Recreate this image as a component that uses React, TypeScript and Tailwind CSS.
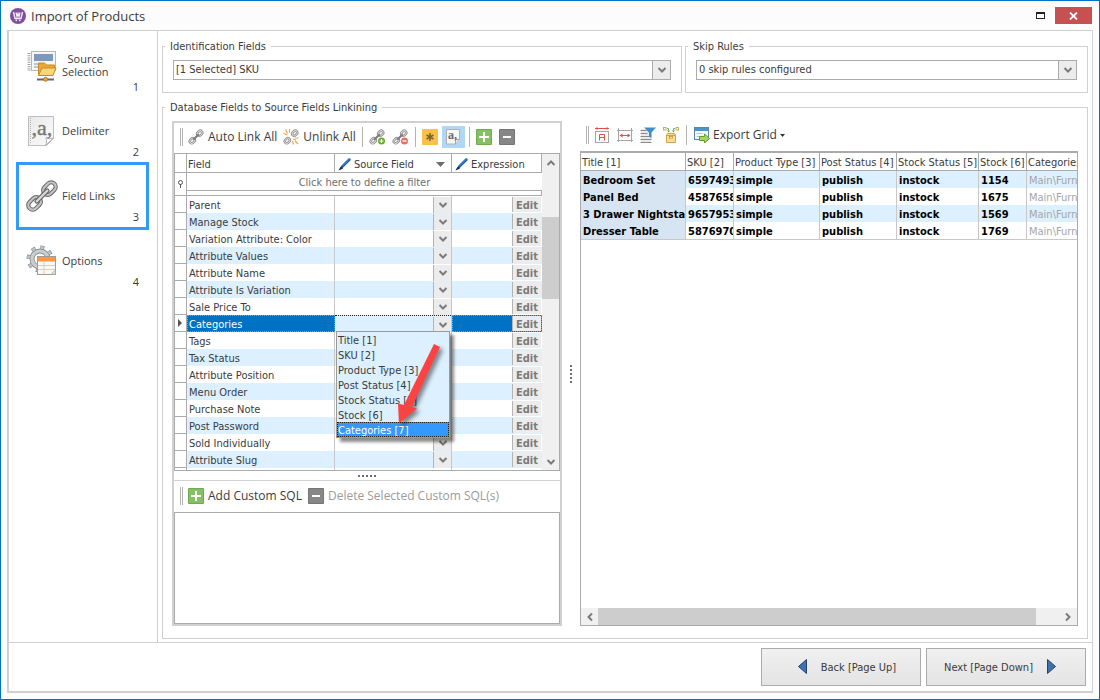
import type { ReactNode } from 'react';

const SOURCE_FIELDS = [
  'Title [1]',
  'SKU [2]',
  'Product Type [3]',
  'Post Status [4]',
  'Stock Status [5]',
  'Stock [6]',
  'Categories [7]',
];

const DB_FIELDS = [
  'Parent',
  'Manage Stock',
  'Variation Attribute: Color',
  'Attribute Values',
  'Attribute Name',
  'Attribute Is Variation',
  'Sale Price To',
  'Categories',
  'Tags',
  'Tax Status',
  'Attribute Position',
  'Menu Order',
  'Purchase Note',
  'Post Password',
  'Sold Individually',
  'Attribute Slug',
];

const PRODUCTS = [
  ['Bedroom Set', '6597493', 'simple', 'publish', 'instock', '1154', 'Main\\Furniture'],
  ['Panel Bed', '4587658', 'simple', 'publish', 'instock', '1675', 'Main\\Furniture'],
  ['3 Drawer Nightstand', '9657953', 'simple', 'publish', 'instock', '1569', 'Main\\Furniture'],
  ['Dresser Table', '5876970', 'simple', 'publish', 'instock', '1769', 'Main\\Furniture'],
];

/* ---------- icons ---------- */

function AppIcon() {
  return (
    <svg width="16" height="16" viewBox="0 0 16 16">
      <circle cx="8" cy="8" r="8" fill="#7f4fa0" />
      <path d="M3.5 4 L5 10.5 H11 L12.5 4" fill="none" stroke="#f3ecf7" strokeWidth="1.4" />
      <path d="M6 4.5 L7 8.5 L8 5.5 L9 8.5 L10 4.5" fill="none" stroke="#f3ecf7" strokeWidth="1.3" />
      <circle cx="6.3" cy="12.3" r="0.9" fill="#f3ecf7" />
      <circle cx="9.8" cy="12.3" r="0.9" fill="#f3ecf7" />
    </svg>
  );
}

function SourceIcon() {
  return (
    <svg width="32" height="32" viewBox="0 0 32 32">
      <path d="M3 3v18" stroke="#a0a0a0" strokeWidth="3" strokeDasharray="1 1.2" />
      <rect x="5.5" y="1.5" width="24" height="19" fill="#f4f5f6" stroke="#b5b5b5" />
      <rect x="8" y="4" width="19" height="7" fill="#7d97bd" />
      <path d="M8 14h8M8 17h5" stroke="#7d97bd" />
      <path d="M12.5 25v-12h6l2 2h8v3.500l-2.500 7z" fill="#e9a93a" stroke="#c98a22" />
      <path d="M12.500 25.500l3.500-7.500h14l-3 7.500z" fill="#fbd678" stroke="#c98a22" />
      <path d="M11 29.500h17" stroke="#666" strokeWidth="2" />
      <circle cx="19.500" cy="29.300" r="2" fill="#f5a623" stroke="#9c6510" strokeWidth="0.7" />
    </svg>
  );
}

function DelimiterIcon() {
  return (
    <svg width="32" height="32" viewBox="0 0 32 32">
      <defs>
        <linearGradient id="sheet" x1="0" y1="0" x2="1" y2="1">
          <stop offset="0" stopColor="#e9e9e9" />
          <stop offset="1" stopColor="#fbfbfb" />
        </linearGradient>
      </defs>
      <path d="M2.500 1.500h25v22l-7 7h-18z" fill="url(#sheet)" stroke="#bdbdbd" />
      <path d="M19.500 30.500c1.500-3 1-5 .5-8c2.500 1.500 5 1.500 7.500.500z" fill="#fff" stroke="#b0b0b0" />
      <path d="M4.500 3v26" stroke="#b5b5b5" strokeDasharray="1 1" />
      <text x="16" y="20" textAnchor="middle" fontFamily="Liberation Serif, serif" fontSize="22" fill="#777" stroke="#777" strokeWidth="0.400">
        ,a,
      </text>
    </svg>
  );
}

function ChainIcon() {
  return (
    <svg width="32" height="32" viewBox="0 0 32 32">
      <g fill="none" transform="rotate(-45 16 16)">
        <rect x="-1.500" y="11.500" width="14" height="9" rx="4.500" stroke="#666" strokeWidth="4.200" />
        <rect x="19.500" y="11.500" width="14" height="9" rx="4.500" stroke="#666" strokeWidth="4.200" />
        <rect x="-1.500" y="11.500" width="14" height="9" rx="4.500" stroke="#c4c4c4" strokeWidth="2.200" />
        <rect x="19.500" y="11.500" width="14" height="9" rx="4.500" stroke="#c4c4c4" strokeWidth="2.200" />
        <path d="M8.500 16h15" stroke="#606060" strokeWidth="4.600" strokeLinecap="round" />
        <path d="M8.500 16h15" stroke="#d6d6d6" strokeWidth="2.400" strokeLinecap="round" />
      </g>
    </svg>
  );
}

function OptionsIcon() {
  return (
    <svg width="32" height="32" viewBox="0 0 32 32">
      <circle cx="14" cy="14" r="11.500" fill="none" stroke="#8b9196" strokeWidth="4" strokeDasharray="4 5.030" />
      <circle cx="14" cy="14" r="8" fill="none" stroke="#8b9196" strokeWidth="5" />
      <circle cx="14" cy="14" r="8" fill="none" stroke="#c9ced1" strokeWidth="3.200" />
      <circle cx="14" cy="14" r="11.500" fill="none" stroke="#c2c7ca" strokeWidth="2.600" strokeDasharray="2.600 6.430" strokeDashoffset="-0.700" />
      <rect x="11.500" y="11.500" width="18" height="18" fill="#fbf7f2" stroke="#a49c94" />
      <rect x="12" y="12" width="17" height="4.500" fill="#f59a4a" />
      <path d="M12 20.500h17M12 24.500h17M18 17v12" stroke="#d5cfc8" />
      <path d="M29.500 24.500l-4.500 5h4.500z" fill="#ddd" stroke="#999" strokeWidth="0.600" />
    </svg>
  );
}

function SmallChain({ mark }: { mark?: 'spark' | 'add' | 'remove' }) {
  return (
    <svg width="16" height="16" viewBox="0 0 16 16">
      <g fill="none" transform="rotate(-45 8 8)">
        <rect x="0" y="6" width="5.500" height="4" rx="2" stroke="#858585" strokeWidth="2.400" />
        <rect x="10.500" y="6" width="5.500" height="4" rx="2" stroke="#858585" strokeWidth="2.400" />
        <rect x="0" y="6" width="5.500" height="4" rx="2" stroke="#dcdcdc" strokeWidth="1" />
        <rect x="10.500" y="6" width="5.500" height="4" rx="2" stroke="#dcdcdc" strokeWidth="1" />
        {mark !== 'spark' && <path d="M4 8h8" stroke="#7d7d7d" strokeWidth="2" />}
      </g>
      {mark === 'spark' && (
        <path d="M2.500 0.500l2 4M0.500 4.500l4 1.500M6.500 0v3.500M10 10l3 1M9.500 12l1 3.500M12 9h3.500M12 12l3 3" stroke="#f2a24a" strokeWidth="1.200" fill="none" />
      )}
      {mark === 'add' && (
        <>
          <circle cx="12.500" cy="12" r="3.500" fill="#6aab2e" />
          <path d="M10.500 12h4M12.500 10v4" stroke="#fff" strokeWidth="1.200" />
        </>
      )}
      {mark === 'remove' && (
        <>
          <circle cx="12.500" cy="12" r="3.500" fill="#e8705c" />
          <path d="M10.500 12h4" stroke="#fff" strokeWidth="1.400" />
        </>
      )}
    </svg>
  );
}

function StarIcon() {
  return (
    <svg width="16" height="16" viewBox="0 0 16 16">
      <rect width="16" height="16" rx="1" fill="#fbc04a" />
      <path d="M8 4v8M4.500 6l7 4M11.500 6l-7 4" stroke="#7a6238" strokeWidth="1.600" />
    </svg>
  );
}

function PageIcon() {
  return (
    <svg width="14" height="16" viewBox="0 0 14 16">
      <path d="M0.500 0.500h13v10l-4 4.500h-9z" fill="#f7f7f7" stroke="#b0b0b0" />
      <path d="M9.500 15v-4.500h4" fill="#e4e4e4" stroke="#a5a5a5" />
      <text x="2" y="10" fontFamily="Liberation Serif, serif" fontWeight="bold" fontSize="12" fill="#666">
        a,
      </text>
    </svg>
  );
}

function PlusIcon() {
  return (
    <svg width="16" height="16" viewBox="0 0 16 16">
      <rect width="16" height="16" rx="1" fill="#6faa50" />
      <rect x="1" y="1" width="14" height="14" fill="#86c065" />
      <path d="M3 8h10M8 3v10" stroke="#fff" strokeWidth="2" />
    </svg>
  );
}

function MinusIcon() {
  return (
    <svg width="16" height="16" viewBox="0 0 16 16">
      <rect width="16" height="16" rx="1" fill="#757575" />
      <rect x="1" y="1" width="14" height="14" fill="#878787" />
      <path d="M4 8h8" stroke="#fff" strokeWidth="2" />
    </svg>
  );
}

function PenIcon() {
  return (
    <svg width="14" height="14" viewBox="0 0 14 14">
      <path d="M0.500 13.500l3-5l7-7c1.200-1 3 .8 1.800 2l-7.300 7.200z" fill="#1657a8" />
      <path d="M4 9.500l7.500-7.500" stroke="#4d94e0" />
      <path d="M0.500 13.500l2.500-4l2 2z" fill="#0d2b57" />
    </svg>
  );
}

function FitTextIcon() {
  return (
    <svg width="16" height="16" viewBox="0 0 16 16" fill="none">
      <path d="M1 1.500h14" stroke="#d9534f" />
      <path d="M3.500 0v3l-2.500-1.500zM12.500 0v3l2.500-1.500z" fill="#d9534f" />
      <rect x="1.500" y="4.500" width="13" height="11" stroke="#a5a5a5" />
      <path d="M5.500 13.500v-6h5v6M5.500 10.500h5" stroke="#d9534f" />
    </svg>
  );
}

function FitWidthIcon() {
  return (
    <svg width="16" height="16" viewBox="0 0 16 16" fill="none">
      <path d="M1.500 1v14M14.500 1v14M0 3.500h16M0 13.500h16" stroke="#a5a5a5" />
      <path d="M3 8.500h10" stroke="#d9534f" />
      <path d="M5.500 6.500v4l-3-2zM10.500 6.500v4l3-2z" fill="#d9534f" />
    </svg>
  );
}

function FilterIcon() {
  return (
    <svg width="16" height="16" viewBox="0 0 16 16" fill="none">
      <rect x="1" y="2" width="10" height="13" fill="#e9e9e9" />
      <path d="M0.500 3.500h6M0.500 6.500h7M0.500 9.500h9M0.500 12.500h11M0.500 15.500h11" stroke="#8b8b8b" />
      <path d="M4 0.500h12l-4.500 5v6l-2.500-2v-4z" fill="#3c8fca" />
    </svg>
  );
}

function BoxIcon() {
  return (
    <svg width="16" height="16" viewBox="0 0 16 16" fill="none">
      <rect x="0.500" y="0.500" width="2.500" height="2.500" stroke="#d0a866" />
      <rect x="13" y="0.500" width="2.500" height="2.500" stroke="#d0a866" />
      <path d="M4 1.500h1.500v2M12 1.500h-1.500v2" stroke="#7cab64" />
      <path d="M4 3.500h3l-1.500 2zM9 3.500h3l-1.500 2z" fill="#5fa343" />
      <path d="M3.500 8l1-1.500h7l1 1.500v7.500h-9z" fill="#f9dc92" stroke="#cfa346" />
      <path d="M3.500 8.500h9" stroke="#cfa346" />
      <rect x="6.500" y="9.500" width="3" height="1.500" fill="#fff" stroke="#b08a3a" strokeWidth="0.700" />
    </svg>
  );
}

function ExportIcon() {
  return (
    <svg width="16" height="16" viewBox="0 0 16 16" fill="none">
      <rect x="0.500" y="0.500" width="14" height="12" fill="#f5f8fb" stroke="#5b86a8" />
      <rect x="1" y="1" width="13" height="3" fill="#4a94cc" />
      <path d="M2.500 6.500h6M2.500 9.500h4" stroke="#b9c9d6" />
      <path d="M5.500 9.500h5v-2.500l5 4.500l-5 4.500v-2.500h-5z" fill="#a4d65e" stroke="#5f9f2a" />
    </svg>
  );
}

function Chevron({ dir = 'down' }: { dir?: 'down' | 'up' | 'left' | 'right' }) {
  const paths = {
    down: 'M1.500 3l3.500 3.500l3.500-3.500',
    up: 'M1.500 7l3.500-3.500l3.500 3.500',
    left: 'M7 1.500l-3.500 3.500l3.500 3.500',
    right: 'M3 1.500l3.500 3.500l-3.500 3.500',
  };
  return (
    <svg width="10" height="10" viewBox="0 0 10 10" className="shrink-0">
      <path d={paths[dir]} fill="none" stroke="#7b7b7b" strokeWidth="2" />
    </svg>
  );
}

function PointerArrow() {
  return (
    <svg width="60" height="96" viewBox="0 0 60 96" className="pointer-events-none absolute left-[56px] top-[8px] drop-shadow-[3px_3px_2px_rgba(0,0,0,0.45)]">
      <path d="M42 5l6 3l-28 60l5 1.500l-18 15l-1-20l6 1.500z" fill="#fb4343" />
    </svg>
  );
}

/* ---------- small parts ---------- */

function Grip() {
  return <span className="h-[18px] w-[3px] shrink-0 border-x border-[#b4b4b4]" />;
}

function Separator() {
  return <span className="h-[20px] w-px shrink-0 bg-[#b4b4b4]" />;
}

function Dots({ vertical }: { vertical?: boolean }) {
  return (
    <span className={vertical ? 'flex flex-col gap-[2px]' : 'flex gap-[2px]'}>
      {[0, 1, 2, 3, 4].map((i) => (
        <i key={i} className="size-[2px] bg-[#6d6d6d]" />
      ))}
    </span>
  );
}

function ToolButton({ icon, label, disabled, title }: { icon: ReactNode; label?: string; disabled?: boolean; title?: string }) {
  return (
    <button
      type="button"
      aria-label={title}
      disabled={disabled}
      className="flex items-center gap-1 whitespace-nowrap font-['Open_Sans',sans-serif] text-[12px] leading-[16px] disabled:text-[#9b9b9b]"
    >
      {icon}
      {label}
    </button>
  );
}

function GroupBox({ title, className = '', children }: { title: string; className?: string; children: ReactNode }) {
  return (
    <fieldset className={`min-w-0 border border-[#d0d0d0] px-[9px] pt-[7px] ${className}`}>
      <legend className="-ml-[7px] h-[14px] px-[5px] leading-[16px]">{title}</legend>
      {children}
    </fieldset>
  );
}

function Combo({ label, value }: { label: string; value: string }) {
  return (
    <div className="mx-px grid h-[20px] grid-cols-[1fr_18px] border border-[#ababab]">
      <select aria-label={label} className="col-span-2 col-start-1 row-start-1 appearance-none bg-white pl-[2px] leading-[18px] outline-none">
        <option>{value}</option>
      </select>
      <span className="pointer-events-none col-start-2 row-start-1 flex items-center justify-center border-l border-[#ababab] bg-[#ececec]">
        <Chevron />
      </span>
    </div>
  );
}

function NavItem({ icon, label, num, active }: { icon: ReactNode; label: ReactNode; num: number; active?: boolean }) {
  return (
    <button
      type="button"
      className={`-mt-[3px] flex h-[68px] items-center gap-1 border-[3px] px-[7px] font-['Open_Sans',sans-serif] leading-[13px] first:mt-0 ${active ? 'border-[#3399ff]' : 'border-transparent'}`}
    >
      {icon}
      <span className="pb-[2px] text-center">{label}</span>
      <span className="ml-auto self-end pb-1">{num}</span>
    </button>
  );
}

/* ---------- field mapping grid ---------- */

function FieldRow({ name, odd, selected }: { name: string; odd: boolean; selected: boolean }) {
  const dotted = selected ? 'outline-1 -outline-offset-1 outline-dotted outline-[#e08a3c]' : '';
  return (
    <tr className={`h-[17px] ${odd ? 'bg-[#dcf0ff]' : 'bg-white'}`}>
      <td className="border-b border-r border-[#ababab] bg-white p-0">
        {selected && (
          <svg width="4" height="8" viewBox="0 0 4 8" className="ml-[3px]">
            <path d="M0 0l4 4l-4 4z" fill="#555" />
          </svg>
        )}
      </td>
      <td className={`truncate p-0 pl-[2px] pt-px ${selected ? 'bg-[#0072c6] text-white' : 'border-r border-[#c8c8c8]'} ${dotted}`}>{name}</td>
      <td className={`relative border-r border-[#c8c8c8] p-0 ${selected ? 'bg-[#dcf0ff]' : ''}`}>
        <div className={`grid h-[17px] grid-cols-[1fr_18px] ${selected ? 'border-t border-dotted border-[#222]' : ''}`}>
          <select aria-label={`Source field for ${name}`} className="col-span-2 col-start-1 row-start-1 h-[16px] w-full appearance-none outline-none">
            <option></option>
            {SOURCE_FIELDS.map((f) => (
              <option key={f}>{f}</option>
            ))}
          </select>
          <span className="pointer-events-none col-start-2 row-start-1 mt-px flex items-center justify-center border-l border-[#b4b4b4] bg-[#ececec]">
            <Chevron />
          </span>
        </div>
        {selected && <SourceFieldList />}
      </td>
      <td className={`p-0 ${selected ? 'bg-[#0072c6]' : ''} ${dotted}`}>
        <button type="button" className="ml-auto mr-px block h-[15px] w-[29px] border-l border-[#b4b4b4] bg-[#ececec] pt-px text-center font-bold leading-[15px] text-[#7b7b7b]">
          Edit
        </button>
      </td>
    </tr>
  );
}

function SourceFieldList() {
  return (
    <div className="absolute left-px top-[16px] z-10 w-[114px]">
      <ul role="listbox" aria-label="Source fields" className="border border-[#9a9a9a] bg-[#dcf0ff] shadow-[4px_4px_3px_rgba(0,0,0,0.45)]">
        {SOURCE_FIELDS.map((f, i) => (
          <li
            key={f}
            role="option"
            aria-selected={i === 6}
            className={`h-[15px] whitespace-nowrap pl-px pt-px leading-[15px] ${i === 6 ? 'bg-[#3399ff] text-white outline-1 -outline-offset-1 outline-dotted outline-[#222]' : ''}`}
          >
            {f}
          </li>
        ))}
      </ul>
      <PointerArrow />
    </div>
  );
}

function FieldGrid() {
  return (
    <div className="flex border border-[#ababab]">
      <table className="w-full flex-1 table-fixed border-separate border-spacing-0 text-left">
        <colgroup>
          <col className="w-[12px]" />
          <col />
          <col className="w-[117px]" />
          <col className="w-[90px]" />
        </colgroup>
        <thead>
          <tr className="h-[19px]">
            <th className="border-b border-r border-[#ababab] p-0"></th>
            <th className="border-b border-r border-[#ababab] p-0 pl-px pt-[2px] font-normal">Field</th>
            <th className="border-b border-r border-[#ababab] p-0 pl-[3px] pr-[6px] pt-[2px] font-normal">
              <div className="flex items-center gap-[2px]">
                <PenIcon />
                Source Field
                <svg width="9" height="5" viewBox="0 0 9 5" className="ml-auto">
                  <path d="M0 0h9l-4.500 5z" fill="#6d6d6d" />
                </svg>
              </div>
            </th>
            <th className="border-b border-r border-[#ababab] p-0 pl-[3px] pt-[2px] font-normal">
              <div className="flex items-center gap-[2px]">
                <PenIcon />
                Expression
              </div>
            </th>
          </tr>
          <tr className="h-[18px] text-[#6d6d6d]">
            <td rowSpan={2} className="border-b border-r border-[#ababab] p-0">
              <svg width="7" height="8" viewBox="0 0 7 8" className="mx-auto">
                <circle cx="3.500" cy="2.500" r="2" fill="none" stroke="#555" />
                <path d="M3.500 4v4" stroke="#555" />
              </svg>
            </td>
            <td colSpan={3} className="border-b border-[#ababab] p-0 pt-px text-center">
              Click here to define a filter
            </td>
          </tr>
          <tr className="h-[5px]">
            <td colSpan={3} className="border-b border-r border-[#ababab] p-0"></td>
          </tr>
        </thead>
        <tbody>
          {DB_FIELDS.map((name, i) => (
            <FieldRow key={name} name={name} odd={i % 2 === 1} selected={name === 'Categories'} />
          ))}
          <tr className="h-[2px]">
            <td className="border-r border-[#ababab] p-0"></td>
            <td className="border-r border-[#c8c8c8] p-0"></td>
            <td className="border-r border-[#c8c8c8] p-0"></td>
            <td className="p-0"></td>
          </tr>
        </tbody>
      </table>
      <div className="flex w-[17px] flex-col items-center bg-[#f0f0f0]">
        <span className="flex h-[17px] items-center">
          <Chevron dir="up" />
        </span>
        <span className="mt-[46px] h-[82px] w-full bg-[#cdcdcd]" />
        <span className="mt-auto flex h-[17px] items-center">
          <Chevron />
        </span>
      </div>
    </div>
  );
}

function MappingPanel() {
  return (
    <section className="flex w-[390px] shrink-0 flex-col border-2 border-[#d0d0d0]">
      <div className="flex h-[30px] items-center pb-[2px] pl-[6px]">
        <Grip />
        <div className="ml-[5px] flex items-center gap-[6px]">
          <ToolButton icon={<SmallChain />} label="Auto Link All" />
          <ToolButton icon={<SmallChain mark="spark" />} label="Unlink All" />
          <Separator />
          <div className="flex items-center gap-[7px]">
            <ToolButton icon={<SmallChain mark="add" />} title="Link field" />
            <ToolButton icon={<SmallChain mark="remove" />} title="Unlink field" />
            <Separator />
          </div>
          <div className="flex items-center gap-1">
            <ToolButton icon={<StarIcon />} title="Required fields" />
            <button type="button" aria-label="Show names" aria-pressed="true" className="flex h-[22px] w-[23px] items-center justify-center bg-[#b0d7f3]">
              <PageIcon />
            </button>
            <Separator />
          </div>
          <div className="flex items-center gap-[7px]">
            <ToolButton icon={<PlusIcon />} title="Add" />
            <ToolButton icon={<MinusIcon />} title="Remove" />
          </div>
        </div>
      </div>
      <FieldGrid />
      <div className="flex h-[9px] items-center justify-center">
        <Dots />
      </div>
      <div className="flex h-[32px] items-center border-t border-[#d0d0d0] pb-px pl-[6px]">
        <Grip />
        <div className="ml-[5px] flex items-center gap-[6px]">
          <ToolButton icon={<PlusIcon />} label="Add Custom SQL" />
          <ToolButton icon={<MinusIcon />} label="Delete Selected Custom SQL(s)" disabled />
        </div>
      </div>
      <textarea aria-label="Custom SQL" className="min-h-[90px] flex-1 resize-none border border-[#ababab] px-1 outline-none" />
    </section>
  );
}

/* ---------- preview of the source file ---------- */

function PreviewPanel() {
  return (
    <section className="flex min-w-0 flex-1 flex-col">
      <div className="flex h-[30px] items-center pb-[2px] pl-[6px]">
        <Grip />
        <div className="ml-[5px] flex items-center gap-[7px]">
          <ToolButton icon={<FitTextIcon />} title="Best fit by content" />
          <ToolButton icon={<FitWidthIcon />} title="Fit to width" />
          <ToolButton icon={<FilterIcon />} title="Filter" />
          <ToolButton icon={<BoxIcon />} title="Group columns" />
          <Separator />
          <button type="button" className="flex items-center gap-[3px] whitespace-nowrap font-['Open_Sans',sans-serif] text-[12px] leading-[16px]">
            <ExportIcon />
            Export Grid
            <svg width="5" height="3" viewBox="0 0 5 3">
              <path d="M0 0h5l-2.500 3z" fill="#333" />
            </svg>
          </button>
        </div>
      </div>
      <div className="flex flex-1 flex-col border border-t-2 border-[#ababab]">
        <table className="w-full table-fixed border-separate border-spacing-0 border-b border-[#c8c8c8] text-left">
          <colgroup>
            <col className="w-[105px]" />
            <col className="w-[48px]" />
            <col className="w-[86px]" />
            <col className="w-[77px]" />
            <col className="w-[82px]" />
            <col className="w-[48px]" />
            <col />
          </colgroup>
          <thead>
            <tr className="h-[18px]">
              {SOURCE_FIELDS.map((f) => (
                <th key={f} className="overflow-hidden whitespace-nowrap border-b border-r border-[#ababab] p-0 pl-px pt-px font-normal last:border-r-0">
                  {f}
                </th>
              ))}
            </tr>
          </thead>
          <tbody>
            {PRODUCTS.map((row) => (
              <tr key={row[0]} className="h-[17px] odd:bg-[#dcf0ff]">
                {row.map((cell, c) => (
                  <td
                    key={c}
                    className={`overflow-hidden whitespace-nowrap p-0 pl-[2px] pt-px ${c === 0 ? 'bg-[#d7e4f2]' : ''} ${c === 6 ? 'text-[#a5a5a5]' : 'border-r border-[#c8c8c8] font-bold text-black'}`}
                  >
                    {cell}
                  </td>
                ))}
              </tr>
            ))}
          </tbody>
        </table>
        <div className="mt-auto flex h-[17px] items-center bg-[#f0f0f0]">
          <span className="flex w-[17px] justify-center">
            <Chevron dir="left" />
          </span>
          <span className="h-full flex-1 bg-[#cdcdcd]" />
          <span className="flex w-[41px] justify-end pr-[4px]">
            <Chevron dir="right" />
          </span>
        </div>
      </div>
    </section>
  );
}

/* ---------- window ---------- */

export default function App() {
  return (
    <div className="flex min-h-screen flex-col border border-[#0072c6] bg-[#fcfcfc] px-[6px] pb-[6px] font-['DejaVu_Sans_Condensed','Noto_Sans',sans-serif] text-[11px] leading-[15px] text-[#3b3b3b]">
      <header className="flex h-[29px] items-center gap-[5px] pl-[3px]">
        <AppIcon />
        <h1 className="font-['Open_Sans',sans-serif] text-[13px] leading-[18px]">Import of Products</h1>
        <button type="button" aria-label="Maximize" className="ml-auto flex h-[17px] w-[20px] items-center justify-center">
          <span className="h-[7px] w-[9px] border border-t-2 border-[#222]" />
        </button>
        <button type="button" aria-label="Close" className="mr-px flex h-[17px] w-[37px] items-center justify-center bg-[#c75050]">
          <svg width="9" height="8" viewBox="0 0 9 8">
            <path d="M1 0.500l7 7M8 0.500l-7 7" stroke="#fff" strokeWidth="1.800" />
          </svg>
        </button>
      </header>

      <div className="flex flex-1 flex-col border border-b-2 border-l-2 border-[#d0d0d0] bg-white">
        <div className="flex flex-1">
          <nav className="flex w-[149px] shrink-0 flex-col border-r border-[#d0d0d0] pl-[7px] pr-[8px] pt-px">
            <NavItem
              icon={<SourceIcon />}
              label={
                <>
                  Source
                  <br />
                  Selection
                </>
              }
              num={1}
            />
            <NavItem icon={<DelimiterIcon />} label="Delimiter" num={2} />
            <NavItem icon={<ChainIcon />} label="Field Links" num={3} active />
            <NavItem icon={<OptionsIcon />} label="Options" num={4} />
          </nav>

          <main className="flex min-w-0 flex-1 flex-col gap-[7px] px-1 pb-[3px] pt-2">
            <div className="grid grid-cols-[520fr_403fr] gap-[3px]">
              <GroupBox title="Identification Fields" className="pb-[12px]">
                <Combo label="Identification Fields" value="[1 Selected] SKU" />
              </GroupBox>
              <GroupBox title="Skip Rules" className="pb-[12px]">
                <Combo label="Skip Rules" value="0 skip rules configured" />
              </GroupBox>
            </div>
            <GroupBox title="Database Fields to Source Fields Linkining" className="flex flex-1 pb-[12px]">
              <MappingPanel />
              <div className="flex w-[18px] shrink-0 items-center justify-center">
                <Dots vertical />
              </div>
              <PreviewPanel />
            </GroupBox>
          </main>
        </div>

        <footer className="flex justify-end gap-[5px] border-t border-[#d0d0d0] py-[5px] pr-[6px]">
          <button type="button" className="flex h-[38px] w-[160px] items-center justify-center gap-[14px] border border-[#ababab] bg-linear-to-b from-[#f0f0f0] to-[#e4e4e4] pl-[12px]">
            <svg width="9" height="16" viewBox="0 0 9 16">
              <path d="M8.500 0.500v14l-8-7z" fill="#3f70b0" stroke="#22436f" />
            </svg>
            Back [Page Up]
          </button>
          <button type="button" className="flex h-[38px] w-[160px] items-center justify-center gap-[14px] border border-[#ababab] bg-linear-to-b from-[#f0f0f0] to-[#e4e4e4] pr-[12px]">
            Next [Page Down]
            <svg width="9" height="16" viewBox="0 0 9 16">
              <path d="M0.500 0.500v14l8-7z" fill="#3f70b0" stroke="#22436f" />
            </svg>
          </button>
        </footer>
      </div>
    </div>
  );
}
